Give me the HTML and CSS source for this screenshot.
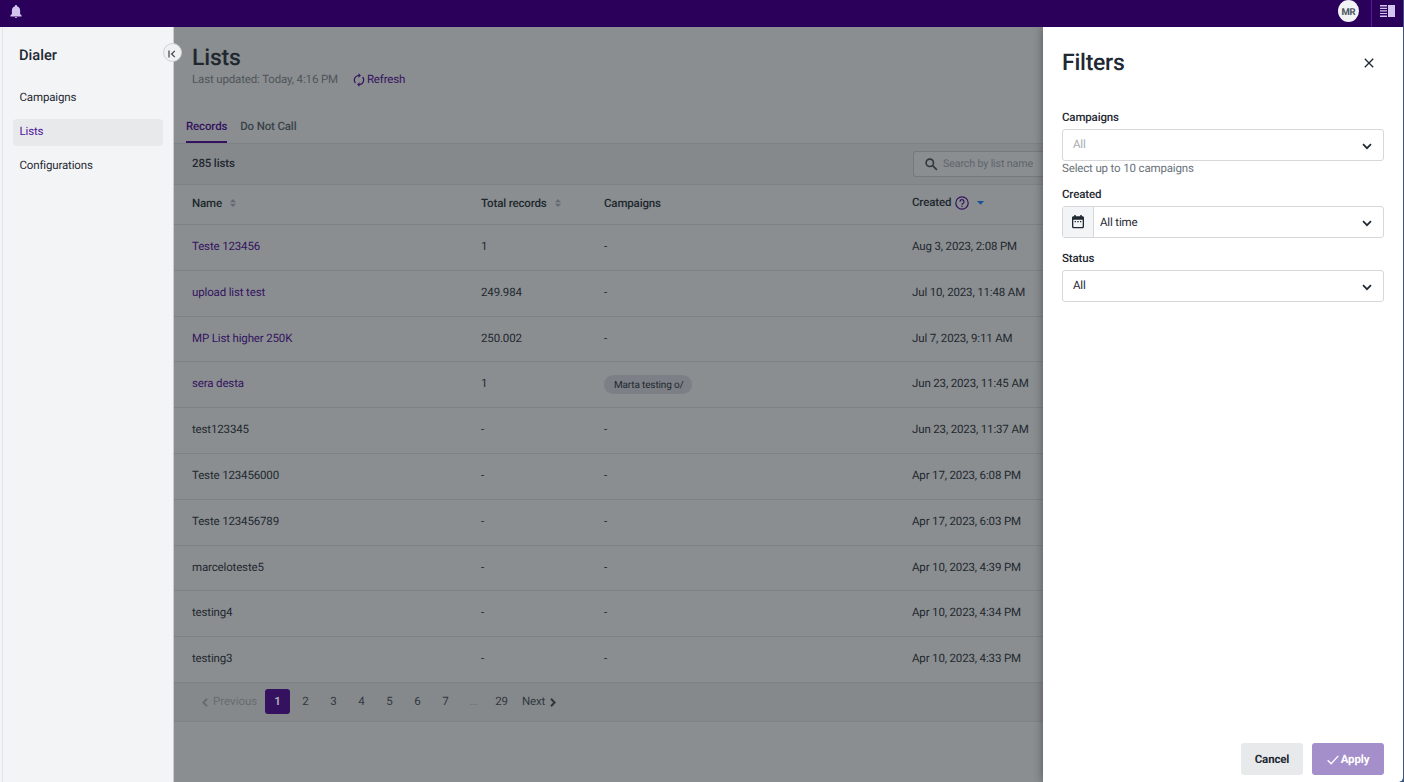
FILE: index.html
```
<!DOCTYPE html>
<html lang="en">
<head>
<meta charset="utf-8">
<title>Dialer - Lists</title>
<link rel="stylesheet" href="styles.css">
</head>
<body>
<div class="window">
<header class="topbar">
  <svg class="bell" width="12" height="14" viewBox="0 0 12 14"><path d="M6 0a1.2 1.2 0 0 0-1.1 1.3C3 1.9 1.9 3.500 1.900 5.500V9L.4 10.500v.9h11.200v-.9L10.100 9V5.500c0-2-1.100-3.600-3-4.200A1.200 1.200 0 0 0 6 0zM4.800 12a1.250 1.250 0 0 0 2.400 0z"/></svg>
  <span class="avatar">MR</span>
  <span class="panel-toggle"><svg width="15" height="12" viewBox="0 0 15 12"><path d="M0 0h7v1.500H0zM0 2.700h7v1.200H0zM0 5.300h7v1.200H0zM0 7.900h7v1.200H0zM0 10.500h7V12H0zM8 0h7v12H8z"/></svg></span>
</header>
<div class="body">
  <aside class="sidebar">
    <h2 class="side-title">Dialer</h2>
    <a class="side-link">Campaigns</a>
    <a class="side-link active">Lists</a>
    <a class="side-link">Configurations</a>
    <span class="collapse"><svg width="8" height="8" viewBox="0 0 8 8"><path d="M1 .4v7.200M6.800.8 3.600 4l3.200 3.200"/></svg></span>
  </aside>
  <main class="main">
    <h1 class="title">Lists</h1>
    <div class="meta"><span>Last updated: Today, 4:16 PM</span>
      <span class="refresh"><svg width="12" height="14" viewBox="0 0 12 14"><path d="M6 2.500A4.600 4.600 0 0 0 2.400 10M6 11.500A4.600 4.600 0 0 0 9.600 4"/><path class="fill" d="M5.500.2v4.600L7.900 2.500zM6.500 9.200v4.600L4.100 11.500z"/></svg>Refresh</span>
    </div>
    <nav class="tabs"><span class="tab on">Records</span><span class="tab">Do Not Call</span></nav>
    <div class="tools"><span>285 lists</span>
      <div class="search"><svg width="13" height="13" viewBox="0 0 13 13"><circle cx="4.800" cy="4.800" r="3.700"/><path d="m7.600 7.600 4.300 4.300"/></svg>Search by list name</div>
    </div>
    <div class="row head">
      <span>Name<svg class="sort" width="6" height="8" viewBox="0 0 6 8"><path d="M0 3.200 3 0l3 3.200zM0 4.800h6L3 8z"/></svg></span>
      <span>Total records<svg class="sort" width="6" height="8" viewBox="0 0 6 8"><path d="M0 3.200 3 0l3 3.200zM0 4.800h6L3 8z"/></svg></span>
      <span>Campaigns</span>
      <span class="created">Created<svg class="help" width="14" height="14" viewBox="0 0 14 14"><circle cx="7" cy="7" r="6.200"/><path d="M5 5.700a2 2 0 1 1 3 1.700c-.7.400-1 .7-1 1.300M7 9.700v1.300"/></svg><svg class="desc" width="7" height="4" viewBox="0 0 7 4"><path d="M0 0h7L3.500 3.800z"/></svg></span>
    </div>
    <div class="row"><a>Teste 123456</a><span>1</span><span>-</span><span>Aug 3, 2023, 2:08 PM</span></div>
    <div class="row"><a>upload list test</a><span>249.984</span><span>-</span><span>Jul 10, 2023, 11:48 AM</span></div>
    <div class="row"><a>MP List higher 250K</a><span>250.002</span><span>-</span><span>Jul 7, 2023, 9:11 AM</span></div>
    <div class="row"><a>sera desta</a><span>1</span><span class="chip-cell"><b class="chip">Marta testing o/</b></span><span>Jun 23, 2023, 11:45 AM</span></div>
    <div class="row"><span>test123345</span><span>-</span><span>-</span><span>Jun 23, 2023, 11:37 AM</span></div>
    <div class="row"><span>Teste 123456000</span><span>-</span><span>-</span><span>Apr 17, 2023, 6:08 PM</span></div>
    <div class="row"><span>Teste 123456789</span><span>-</span><span>-</span><span>Apr 17, 2023, 6:03 PM</span></div>
    <div class="row"><span>marceloteste5</span><span>-</span><span>-</span><span>Apr 10, 2023, 4:39 PM</span></div>
    <div class="row"><span>testing4</span><span>-</span><span>-</span><span>Apr 10, 2023, 4:34 PM</span></div>
    <div class="row"><span>testing3</span><span>-</span><span>-</span><span>Apr 10, 2023, 4:33 PM</span></div>
    <div class="pager">
      <span class="prev"><svg width="6" height="9" viewBox="0 0 6 9"><path d="M5 .8 1.400 4.500 5 8.200"/></svg>Previous</span>
      <span class="page current">1</span><span class="page">2</span><span class="page">3</span><span class="page">4</span><span class="page">5</span><span class="page">6</span><span class="page">7</span><span class="page dots">...</span><span class="page">29</span>
      <span class="next">Next<svg width="6" height="9" viewBox="0 0 6 9"><path d="M1 .8 4.600 4.500 1 8.200"/></svg></span>
    </div>
  </main>
  <section class="filters">
    <div class="filters-head"><h2 class="filters-title">Filters</h2><svg width="10" height="10" viewBox="0 0 10 10"><path d="m.8.8 8.400 8.400M9.200.8.800 9.200"/></svg></div>
    <label class="label">Campaigns</label>
    <div class="select muted"><span class="value">All</span><svg class="chev" width="10" height="7" viewBox="0 0 10 7"><path d="m1 1.200 4 4 4-4"/></svg></div>
    <p class="hint">Select up to 10 campaigns</p>
    <label class="label">Created</label>
    <div class="select"><span class="cal"><svg width="12" height="14" viewBox="0 0 12 14"><path fill-rule="evenodd" d="M1.500 1.300h.8V0h1.500v1.300h4.400V0h1.500v1.300h.8c.8 0 1.500.6 1.500 1.400v9c0 .8-.7 1.500-1.500 1.500h-9C.7 13.200 0 12.500 0 11.700v-9c0-.8.700-1.400 1.500-1.400zM1.300 4.800v6.600c0 .3.200.5.500.5h8.400c.3 0 .5-.2.500-.5V4.800zM2.600 6h1.300v1.300H2.600zM5.300 6h1.400v1.300H5.300zM8 6h1.300v1.300H8z"/></svg></span><span class="value time">All time</span><svg class="chev" width="10" height="7" viewBox="0 0 10 7"><path d="m1 1.200 4 4 4-4"/></svg></div>
    <label class="label status">Status</label>
    <div class="select"><span class="value">All</span><svg class="chev" width="10" height="7" viewBox="0 0 10 7"><path d="m1 1.200 4 4 4-4"/></svg></div>
    <div class="actions"><button class="btn cancel">Cancel</button><button class="btn apply"><svg width="12" height="10" viewBox="0 0 12 10"><path d="m.7 5.300 3.400 3.500L11.300.9"/></svg>Apply</button></div>
  </section>
</div>
</div>
</body>
</html>
```
FILE: styles.css
```
* { box-sizing: border-box; }
body { margin: 0; background: #3b5680; font: 11.5px/14px Roboto, sans-serif; letter-spacing: -.15px; text-rendering: geometricPrecision; color: #1f2933; }
h1, h2, p { margin: 0; }
svg { display: block; flex: none; fill: none; stroke: currentColor; }
.window { width: 1403px; height: 782px; overflow: hidden; border-bottom-right-radius: 5px; display: flex; flex-direction: column; background: #fff; }
.topbar { height: 27px; flex: none; background: #2a005b; display: flex; align-items: flex-start; }
.topbar svg { fill: #d3c5ee; stroke: none; }
.bell { margin: 5px 0 0 10px; }
.avatar { margin-left: auto; width: 21px; height: 22px; border-radius: 50%; background: #f1f2f4; color: #4a555f; font-weight: 700; font-size: 9.500px; line-height: 25px; text-align: center; }
.panel-toggle { margin-left: 12px; width: 32px; height: 27px; border-left: 1px solid #5b1aa0; padding: 5px 0 0 8px; }
.body { flex: 1; display: flex; min-height: 0; }
.sidebar { width: 174px; flex: none; position: relative; background: #f3f4f6; padding: 20px 10px 0 11px; box-shadow: inset 2px 0 #f3f4f6, inset 3px 0 #e1e3e6; border-right: 1px solid #c9ccd0; }
.side-title { font-size: 14.700px; line-height: 17px; font-weight: 500; letter-spacing: 0; margin: 0 0 20px 8px; }
.side-link { display: block; height: 27px; line-height: 26px; border-radius: 4px; padding-left: 6.500px; margin: 0 0 7px 2px; }
.side-link.active { background: #e8e9eb; color: #4d1599; line-height: 25px; position: relative; top: 1px; }
.collapse { position: absolute; left: 163px; top: 16px; width: 19px; height: 19px; border-radius: 50%; background: #f0f1f2; border: 1px solid #cfd2d5; display: flex; align-items: center; justify-content: center; z-index: 2; color: #39434c; }
.collapse svg { stroke-width: 1.200; margin: 2px 1px 0 0; }
.main { width: 869px; flex: none; background: #8a8e91; overflow: hidden; color: #1f282f; }
.title { font-size: 23px; line-height: 27px; font-weight: 500; padding: 17px 0 0 18px; letter-spacing: -.2px; }
.meta { display: flex; align-items: center; height: 14px; margin: 1px 0 0 18px; color: #4f555a; }
.refresh { display: flex; align-items: center; gap: 2px; margin-left: 15px; color: #34125f; }
.refresh svg { margin-top: 1px; stroke-width: 1.200; }
.refresh svg .fill { fill: currentColor; stroke: none; }
.tabs { display: flex; gap: 13px; height: 58px; padding: 0 12px; border-bottom: 1px solid #7d8286; align-items: flex-end; }
.tab { height: 24px; font-weight: 500; color: #39434b; line-height: 14px; }
.tab.on { color: #34125f; border-bottom: 2px solid #34125f; }
.tools { height: 41px; background: #86898c; border-bottom: 1px solid #7d8286; display: flex; align-items: center; padding-left: 18px; font-weight: 500; }
.tools > span { padding-bottom: 2px; }
.search { margin-left: auto; width: 130px; height: 26px; border: 1px solid #747a80; border-right: 0; border-radius: 3px 0 0 3px; background: #8a8e91; display: flex; align-items: center; gap: 5px; padding: 0 0 1px 11px; color: #5f656b; font-size: 10.700px; font-weight: 400; white-space: nowrap; }
.search svg { color: #30383e; stroke-width: 1.600; margin-top: 1px; }
.row { display: grid; grid-template-columns: 289px 123px 308px 1fr; padding-left: 18px; height: 45.800px; border-bottom: 1px solid #7d8286; align-items: center; }
.row > * { padding-bottom: 2.800px; }
.row a { color: #34125f; }
.row.head { height: 40px; font-weight: 500; color: #20282e; }
.row.head > span { padding-bottom: 3px; display: flex; align-items: center; gap: 8px; }
.sort { fill: #626b74; stroke: none; }
.row.head .created { gap: 4px; padding-bottom: 6px; }
.help { color: #34125f; stroke-width: 1.200; margin-top: 2px; }
.desc { fill: #14529a; stroke: none; margin: 2px 0 0 4px; }
.row .chip-cell { padding: 0; display: flex; }
.chip { height: 19px; line-height: 21px; border-radius: 10px; background: #7c7f86; padding: 0 10px; font-size: 10px; font-weight: 400; letter-spacing: -.15px; width: 88px; white-space: nowrap; }
.pager { height: 39px; background: #86898c; border-bottom: 1px solid #7d8286; display: flex; align-items: center; gap: 3px; padding-left: 28px; color: #30383e; }
.prev, .next { display: flex; align-items: center; gap: 5px; letter-spacing: 0; }
.prev { width: 58px; padding-bottom: 1px; color: #676c71; margin-right: 2px; }
.pager svg { stroke-width: 2; margin-top: 2px; }
.page { width: 25px; height: 25px; line-height: 25px; border-radius: 3px; text-align: center; }
.current { background: #34125f; color: #a9a6b3; font-weight: 700; }
.dots { color: #676c71; }
.next { margin-left: 5px; padding-bottom: 1px; letter-spacing: -.15px; }
.filters { flex: 1; z-index: 1; background: #fff; box-shadow: 0 0 9px rgba(0,0,0,.4); clip-path: inset(0 0 0 -12px); padding: 21px 19px 7px 19px; display: flex; flex-direction: column; }
.filters-head { display: flex; justify-content: space-between; align-items: center; padding-right: 10px; height: 30px; margin-bottom: 32px; }
.filters-head svg { stroke-width: 1.300; margin-bottom: 1px; }
.filters-title { font-size: 23px; line-height: 30px; font-weight: 500; letter-spacing: -.25px; }
.label { font-weight: 500; margin-bottom: 5px; }
.select { height: 32px; flex: none; border: 1px solid #d5d7da; border-radius: 3px; display: flex; align-items: center; padding-right: 11px; }
.value { padding: 0 0 2px 10px; }
.value.time { padding: 0 0 0 6px; }
.muted .value { color: #a6abb0; }
.chev { margin: 3px 0 0 auto; stroke-width: 1.700; }
.cal { width: 31px; height: 30px; background: #f3f4f6; border-right: 1px solid #d5d7da; display: flex; align-items: center; justify-content: center; }
.cal svg { fill: #1f2933; stroke: none; }
.hint { color: #69727a; margin-bottom: 12px; }
.status { margin-top: 13px; }
.actions { margin-top: auto; display: flex; justify-content: flex-end; gap: 9px; }
.btn { height: 32px; border: 0; border-radius: 3px; padding: 0; font: 700 11.5px/32px Roboto, sans-serif; letter-spacing: -.15px; text-rendering: inherit; }
.cancel { width: 62px; background: #e8e9eb; color: #1f2933; }
.apply { width: 72px; background: #a58fcb; color: #fff; display: flex; align-items: center; justify-content: center; gap: 2px; }
.apply svg { stroke-width: 1.300; margin-top: 1px; }
```
